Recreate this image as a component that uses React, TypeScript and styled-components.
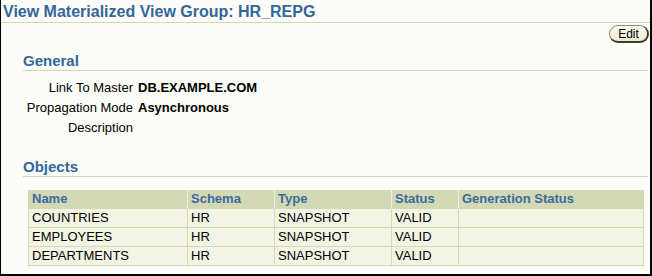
import React from "react";
import styled, { createGlobalStyle } from "styled-components";

const GlobalStyle = createGlobalStyle`
  html, body {
    margin: 0;
    padding: 0;
    background: #ffffff;
  }
  body {
    font-family: "Liberation Sans", Arial, sans-serif;
  }
`;

const Page = styled.div`
  width: 652px;
  height: 276px;
  box-sizing: border-box;
  background-color: #fcfdf9;
  border-left: 1px solid #000;
  border-right: 2px solid #000;
  border-bottom: 2px solid #000;
  display: flex;
  flex-direction: column;
`;

const PageTitle = styled.h1`
  margin: 0;
  padding: 2px 0 0 2px;
  height: 20px;
  line-height: 20px;
  font-size: 16px;
  font-weight: bold;
  color: #336699;
  border-bottom: 1px solid #d3d8b0;
`;

const ButtonBar = styled.div`
  display: flex;
  justify-content: flex-end;
  padding: 2px 1px 0 0;
`;

const Button = styled.button`
  height: 18px;
  width: 40px;
  padding: 0;
  font-family: "Liberation Sans", Arial, sans-serif;
  font-size: 12px;
  color: #000;
  background: linear-gradient(#fbfbef, #ecebd6);
  border: 1px solid #7a7a5e;
  border-right-width: 2px;
  border-bottom-width: 2px;
  border-color: #8c8c70 #3e3e2a #3e3e2a #8c8c70;
  border-radius: 9px;
  line-height: 14px;
`;

const Section = styled.section<{ $top: number }>`
  margin-top: ${(p) => p.$top}px;
  padding: 0 2px 0 22px;
`;

const SectionTitle = styled.h2`
  margin: 0;
  height: 18px;
  line-height: 18px;
  font-size: 15px;
  font-weight: bold;
  color: #336699;
  border-bottom: 1px solid #d3d8b0;
`;

const Fields = styled.dl`
  margin: 7px 0 0 0;
  display: grid;
  grid-template-columns: 110px 1fr;
  column-gap: 5px;
  font-size: 13px;
  line-height: 20px;
`;

const Label = styled.dt`
  text-align: right;
  color: #000;
`;

const Value = styled.dd`
  margin: 0;
  font-weight: bold;
  color: #000;
`;

const Table = styled.table`
  margin: 13px 5px 0 5px;
  width: 615px;
  border-collapse: collapse;
  table-layout: fixed;
  font-size: 13px;
`;

const HeadCell = styled.th<{ $w: number }>`
  width: ${(p) => p.$w}px;
  height: 18px;
  padding: 0 3px;
  box-sizing: border-box;
  text-align: left;
  font-weight: bold;
  color: #3a6a9c;
  background-color: #d3d8b5;
  border-left: 1px solid #eceedf;
  &:first-child {
    border-left: 1px solid #d3d8b5;
  }
`;

const Cell = styled.td`
  height: 18px;
  padding: 0 3px;
  color: #000;
  background-color: #f3f4e4;
  border: 1px solid #d3d8b5;
  white-space: nowrap;
  overflow: hidden;
`;

const columns = [
  { title: "Name", width: 159 },
  { title: "Schema", width: 87 },
  { title: "Type", width: 117 },
  { title: "Status", width: 67 },
  { title: "Generation Status", width: 185 },
];

const objects = [
  ["COUNTRIES", "HR", "SNAPSHOT", "VALID", ""],
  ["EMPLOYEES", "HR", "SNAPSHOT", "VALID", ""],
  ["DEPARTMENTS", "HR", "SNAPSHOT", "VALID", ""],
];

export default function App() {
  return (
    <>
      <GlobalStyle />
      <Page>
        <PageTitle>View Materialized View Group: HR_REPG</PageTitle>
        <ButtonBar>
          <Button>Edit</Button>
        </ButtonBar>
        <Section $top={9}>
          <SectionTitle>General</SectionTitle>
          <Fields>
            <Label>Link To Master</Label>
            <Value>DB.EXAMPLE.COM</Value>
            <Label>Propagation Mode</Label>
            <Value>Asynchronous</Value>
            <Label>Description</Label>
            <Value></Value>
          </Fields>
        </Section>
        <Section $top={20}>
          <SectionTitle>Objects</SectionTitle>
          <Table>
            <thead>
              <tr>
                {columns.map((c) => (
                  <HeadCell key={c.title} $w={c.width}>
                    {c.title}
                  </HeadCell>
                ))}
              </tr>
            </thead>
            <tbody>
              {objects.map((row) => (
                <tr key={row[0]}>
                  {row.map((v, i) => (
                    <Cell key={i}>{v}</Cell>
                  ))}
                </tr>
              ))}
            </tbody>
          </Table>
        </Section>
      </Page>
    </>
  );
}
